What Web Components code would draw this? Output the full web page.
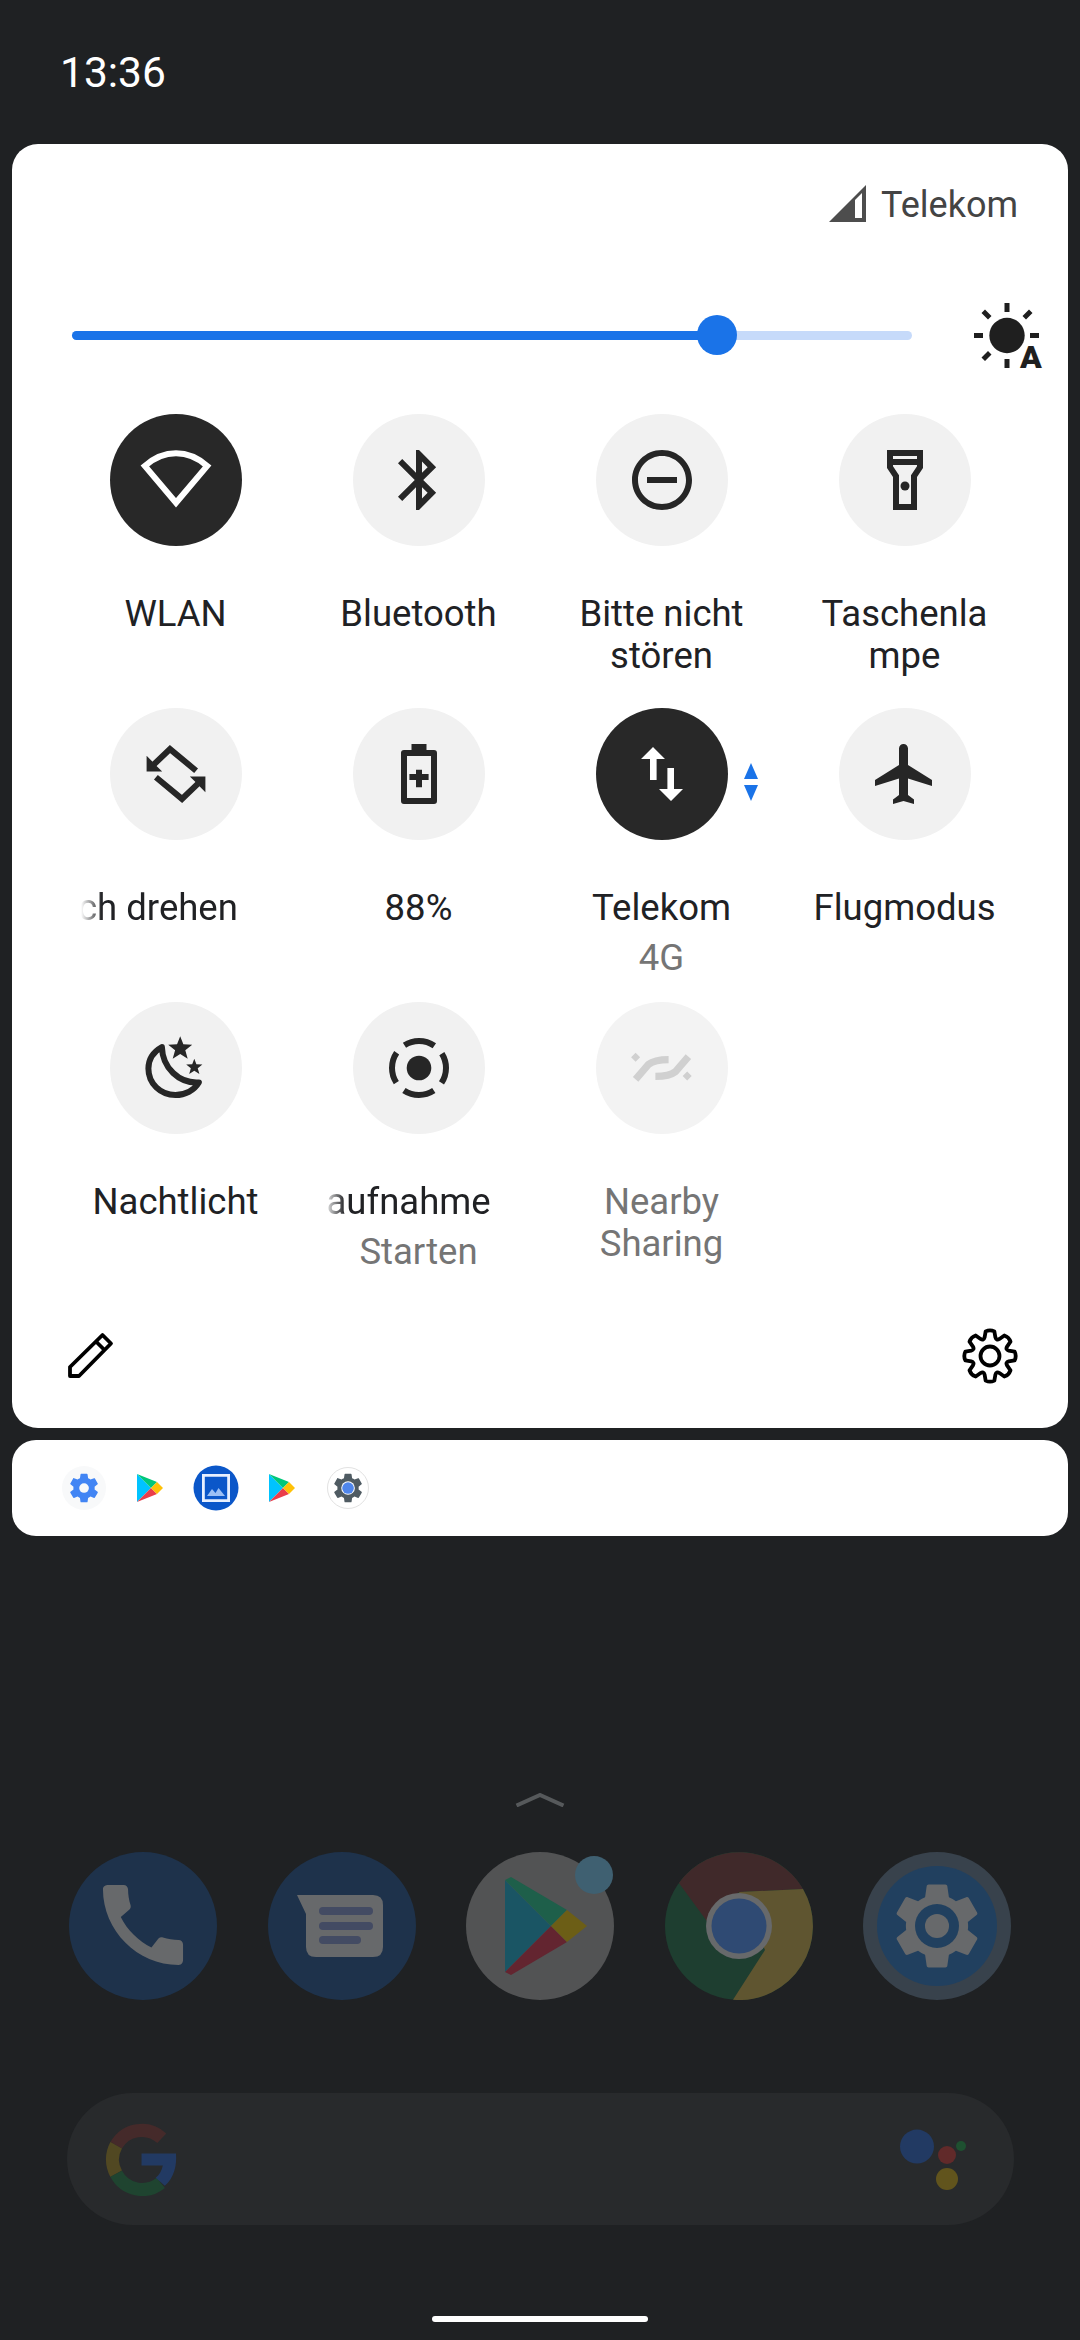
<!doctype html>
<html lang="de">
<head>
<meta charset="utf-8">
<title>Schnelleinstellungen</title>
<style>
  html, body { margin: 0; padding: 0; }
  body { width: 1080px; height: 2340px; background: #1f2123; font-family: Roboto, "Liberation Sans", sans-serif; overflow: hidden; }
  .qs-icon { width: 72px; height: 72px; display: block; }
</style>
</head>
<body>

<phone-screen>
  <status-bar time="13:36"></status-bar>

  <qs-panel>
    <carrier-row slot="carrier" name="Telekom"></carrier-row>
    <brightness-row slot="brightness" value="0.768"></brightness-row>

    <qs-tile label="WLAN" active>
      <svg class="qs-icon" viewBox="0 0 24 24"><path d="M12 19.6 1.6 7.3C4.6 4.7 8.1 3.1 12 3.1s7.4 1.6 10.4 4.2z" fill="none" stroke="#fff" stroke-width="2"/></svg>
    </qs-tile>
    <qs-tile label="Bluetooth">
      <svg class="qs-icon" viewBox="0 0 24 24"><path fill="#262626" d="M17.71 7.71L12 2h-1v7.59L6.41 5 5 6.41 10.59 12 5 17.59 6.41 19 11 14.41V22h1l5.71-5.71-4.3-4.29 4.3-4.29zM13 5.83l1.88 1.88L13 9.59V5.83zm1.88 10.46L13 18.17v-3.76l1.88 1.88z"/></svg>
    </qs-tile>
    <qs-tile label="Bitte nicht stören">
      <svg class="qs-icon" viewBox="0 0 24 24"><path fill="#262626" d="M7 11v2h10v-2H7zm5-9C6.48 2 2 6.48 2 12s4.48 10 10 10 10-4.48 10-10S17.52 2 12 2zm0 18c-4.41 0-8-3.59-8-8s3.59-8 8-8 8 3.59 8 8-3.59 8-8 8z"/></svg>
    </qs-tile>
    <qs-tile label="Taschenla mpe">
      <svg class="qs-icon" viewBox="0 0 24 24"><path fill="#262626" d="M18 2H6v6l2 3v11h8V11l2-3V2zm-2 2v1H8V4h8zm-2 6.4V20h-4v-9.6l-2-3V7h8v.4l-2 3z"/><circle cx="12" cy="14" r="1.5" fill="#262626"/></svg>
    </qs-tile>

    <qs-tile label="ch drehen" fade style="--shift: 2.5px">
      <svg class="qs-icon" viewBox="0 0 24 24"><path d="M18.7 10.9 10 3.7 3.8 9.6M5.3 13.1 14 20.3 20.2 14.4" fill="none" stroke="#262626" stroke-width="2"/><path fill="#262626" d="M2.2 5.9v5.3h5.2l-1.9-1.9L4.1 7.8zM21.8 18.1v-5.3h-5.2l1.9 1.9 1.4 1.5z"/></svg>
    </qs-tile>
    <qs-tile label="88%">
      <svg class="qs-icon" viewBox="0 0 24 24"><path fill="#262626" fill-rule="evenodd" d="M9.5 2h5v2H17a1 1 0 0 1 1 1v16a1 1 0 0 1-1 1H7a1 1 0 0 1-1-1V5a1 1 0 0 1 1-1h2.5zM8 6v14h8V6zM11 10.6h2V12h2.2v2H13v2.4h-2V14H8.8v-2H11z"/></svg>
    </qs-tile>
    <qs-tile label="Telekom" sub="4G" active>
      <svg class="qs-icon" viewBox="0 0 24 24"><path fill="#fff" d="M9 3l4 4h-2.8v7H8V7H5zM15 21l-4-4h2.8v-7H16v7h3z"/></svg>
      <data-arrows slot="extra"></data-arrows>
    </qs-tile>
    <qs-tile label="Flugmodus">
      <svg class="qs-icon" viewBox="0 0 24 24"><path fill="#262626" d="M21 16v-2l-8-5V3.5c0-.83-.67-1.5-1.5-1.5S10 2.67 10 3.5V9l-8 5v2l8-2.5V19l-2 1.5V22l3.5-1 3.5 1v-1.5L13 19v-5.5l8 2.5z"/></svg>
    </qs-tile>

    <qs-tile label="Nachtlicht">
      <svg class="qs-icon" viewBox="0 0 24 24"><path d="M7.3 5C4.5 6.6 2.8 9.2 2.8 12.2 2.8 17.2 6.8 21 11.8 21c3.2 0 6.2-1.5 7.8-4.2C13 17.2 7.500 12 7.300 5z" fill="none" stroke="#262626" stroke-width="2" stroke-linejoin="round"/><path fill="#262626" d="M13.4 1.4l1.05 2.7 2.95.15-2.3 1.85.8 2.85-2.5-1.6-2.5 1.6.8-2.85-2.3-1.85 2.95-.15zM18.1 8.9l.7 1.85 2 .1-1.55 1.25.55 1.9-1.7-1.1-1.7 1.1.55-1.9-1.55-1.25 2-.1z"/></svg>
    </qs-tile>
    <qs-tile label="aufnahme" sub="Starten" fade style="--shift: 8px">
      <svg class="qs-icon" viewBox="0 0 24 24"><circle cx="12" cy="12" r="4.1" fill="#262626"/><circle cx="12" cy="12" r="9" fill="none" stroke="#262626" stroke-width="2" stroke-dasharray="10.5 3.637" stroke-dashoffset="5.25"/></svg>
    </qs-tile>
    <qs-tile label="Nearby Sharing" disabled>
      <svg class="qs-icon" viewBox="0 0 24 24"><path d="M3.2 15.8 7.5 10.8C9 9.600 11 9.200 14.200 9.200M20.800 8.200 16.500 13.200C15 14.400 13 14.800 9.800 14.800" fill="none" stroke="#d0d0d0" stroke-width="2.400"/><path fill="#d0d0d0" d="M3.2 6.900 4.700 8.400 3.200 9.900 1.700 8.400zM20.400 13.200 21.900 14.700 20.400 16.200 18.900 14.700z"/></svg>
    </qs-tile>

    <svg slot="edit" width="50" height="50" viewBox="0 0 50 50"><path d="M5 45V36L37.5 4 46 12.5 14 45zM31 10.5 39.5 19" fill="none" stroke="#000" stroke-width="3.8" stroke-linejoin="round"/></svg>
    <settings-gear slot="settings"></settings-gear>
  </qs-panel>

  <notif-shelf>
    <notif-icon kind="gear-blue"></notif-icon>
    <notif-icon kind="play"></notif-icon>
    <notif-icon kind="photo"></notif-icon>
    <notif-icon kind="play"></notif-icon>
    <notif-icon kind="gear-gray"></notif-icon>
  </notif-shelf>

  <home-dim></home-dim>
</phone-screen>

<script>
customElements.define('phone-screen', class extends HTMLElement {
  constructor() {
    super();
    this.attachShadow({ mode: 'open' }).innerHTML = `
      <style>
        :host { display: flex; flex-direction: column; width: 1080px; height: 2340px; box-sizing: border-box; padding: 0 12px; }
      </style>
      <slot></slot>`;
  }
});

customElements.define('status-bar', class extends HTMLElement {
  connectedCallback() {
    this.attachShadow({ mode: 'open' }).innerHTML = `
      <style>
        :host { display: flex; align-items: center; height: 144px; flex: none; box-sizing: border-box; padding: 0 0 0 48px; color: #fff; font-size: 42.5px; }
      </style>
      <span>${this.getAttribute('time')}</span>`;
  }
});

customElements.define('qs-panel', class extends HTMLElement {
  constructor() {
    super();
    this.attachShadow({ mode: 'open' }).innerHTML = `
      <style>
        :host { display: block; height: 1284px; flex: none; box-sizing: border-box; background: #fff; border-radius: 26px; }
        .grid { display: grid; grid-template-columns: repeat(4, 243px); grid-auto-rows: 294px; margin: 0 0 0 42px; }
        .foot { display: flex; justify-content: space-between; align-items: center; height: 140px; padding: 0 46px 0 53px; }
        .foot ::slotted(svg) { display: block; }
      </style>
      <slot name="carrier"></slot>
      <slot name="brightness"></slot>
      <div class="grid"><slot></slot></div>
      <div class="foot"><slot name="edit"></slot><slot name="settings"></slot></div>`;
  }
});

customElements.define('carrier-row', class extends HTMLElement {
  connectedCallback() {
    this.attachShadow({ mode: 'open' }).innerHTML = `
      <style>
        :host { display: flex; justify-content: flex-end; align-items: center; gap: 15px; height: 122px; padding: 0 50px 0 0; color: #444; font-size: 36px; box-sizing: border-box; }
        svg { display: block; margin-top: -3px; }
      </style>
      <svg width="37" height="37" viewBox="0 0 37 37"><path fill="#4d4d4d" d="M37 0v37H0z"/><path fill="#fff" d="M26 15l7-7v25h-7z"/></svg>
      <span>${this.getAttribute('name')}</span>`;
  }
});

customElements.define('brightness-row', class extends HTMLElement {
  connectedCallback() {
    const v = Number(this.getAttribute('value')) * 100;
    this.attachShadow({ mode: 'open' }).innerHTML = `
      <style>
        :host { display: flex; align-items: center; height: 138px; padding: 0 0 0 60px; box-sizing: border-box; }
        .track { position: relative; width: 840px; height: 9px; border-radius: 5px; background: #c6dafa; }
        .fill { height: 100%; width: ${v}%; border-radius: 5px; background: #1a73e8; }
        .thumb { position: absolute; left: ${v}%; top: 50%; width: 40px; height: 40px; margin: -20px 0 0 -20px; border-radius: 50%; background: #1a73e8; }
        svg { display: block; margin-left: 60px; }
        text { font: 900 32px Roboto, "Liberation Sans", sans-serif; }
      </style>
      <div class="track"><div class="fill"></div><div class="thumb"></div></div>
      <svg width="76" height="84" viewBox="0 -6 76 84" fill="#1f1f1f">
        <circle cx="35" cy="36.5" r="17.7"/>
        <path d="M32.5 4h5v9h-5zM32.500 60h5v9h-5zM2 34h9v5H2zM58 34h9v5H58zM9.500 14l3.500-3.500 6.500 6.500-3.500 3.500zM57 10.500l3.500 3.500-6.500 6.500-3.500-3.500zM13 62l-3.500-3.500 6.500-6.500 3.500 3.500z"/>
        <text x="59" y="69" text-anchor="middle">A</text>
      </svg>`;
  }
});

customElements.define('qs-tile', class extends HTMLElement {
  constructor() {
    super();
    this.attachShadow({ mode: 'open' }).innerHTML = `
      <style>
        :host { display: flex; flex-direction: column; align-items: center; padding-top: 10px; box-sizing: border-box; font-size: 36.5px; line-height: 42px; color: #202124; text-align: center; min-width: 0; }
        .wrap { position: relative; width: 132px; height: 132px; }
        .circle { width: 132px; height: 132px; border-radius: 50%; background: #f1f1f1; display: flex; align-items: center; justify-content: center; }
        :host([active]) .circle { background: #282828; }
        :host([disabled]) .circle { background: #f3f3f3; }
        :host([disabled]) .label { color: #757575; }
        ::slotted([slot="extra"]) { position: absolute; left: 148px; top: 55px; }
        .label { width: 186px; margin-top: 47px; overflow-wrap: anywhere; }
        :host([fade]) .label { box-sizing: border-box; width: 200px; padding-left: var(--shift, 0); white-space: nowrap; text-align: left; -webkit-mask-image: linear-gradient(to right, transparent 5px, #000 26px); mask-image: linear-gradient(to right, transparent 5px, #000 26px); }
        .sub { color: #757575; margin-top: 8px; }
      </style>
      <div class="wrap"><div class="circle"><slot></slot></div><slot name="extra"></slot></div>
      <div class="label"></div>
      <div class="sub" hidden></div>`;
  }
  connectedCallback() {
    const S = this.shadowRoot;
    S.querySelector('.label').textContent = this.getAttribute('label');
    const sub = this.getAttribute('sub');
    if (sub) {
      S.querySelector('.sub').textContent = sub;
      S.querySelector('.sub').hidden = false;
    }
  }
});

customElements.define('data-arrows', class extends HTMLElement {
  constructor() {
    super();
    this.attachShadow({ mode: 'open' }).innerHTML = `
      <style>:host { display: block; width: 14px; height: 38px; } svg { display: block; }</style>
      <svg width="14" height="38" viewBox="0 0 14 38"><path fill="#1a73e8" d="M7 0l7 16H0zM7 38L0 22h14z"/></svg>`;
  }
});

// 齿轮轮廓: 8 个圆角齿, 一个朝上
customElements.define('settings-gear', class extends HTMLElement {
  connectedCallback() {
    const at = (r, deg) => {
      const a = deg * Math.PI / 180;
      return (32 + r * Math.cos(a)).toFixed(2) + ' ' + (32 + r * Math.sin(a)).toFixed(2);
    };
    let d = '';
    for (let i = 0; i < 8; i++) {
      const t = i * 45 - 90;
      d += (i ? 'L' : 'M') + at(19.5, t - 16) + 'L' + at(25, t - 10) + 'Q' + at(26.8, t) + ' ' + at(25, t + 10)
        + 'L' + at(19.5, t + 16) + 'Q' + at(16.5, t + 22.5) + ' ' + at(19.5, t + 29);
    }
    this.attachShadow({ mode: 'open' }).innerHTML = `
      <style>:host { display: block; width: 64px; height: 64px; } svg { display: block; }</style>
      <svg width="64" height="64" viewBox="0 0 64 64" fill="none" stroke="#000" stroke-width="3.8" stroke-linejoin="round"><path d="${d}Z"/><circle cx="32" cy="32" r="9.5"/></svg>`;
  }
});

customElements.define('notif-shelf', class extends HTMLElement {
  constructor() {
    super();
    this.attachShadow({ mode: 'open' }).innerHTML = `
      <style>
        :host { display: grid; grid-template-columns: repeat(5, 66px); align-items: center; justify-items: center; height: 96px; flex: none; margin-top: 12px; padding-left: 39px; border-radius: 24px; background: #fff; }
      </style>
      <slot></slot>`;
  }
});

const GEAR = 'M19.43 12.98c.04-.32.07-.64.07-.98s-.03-.66-.07-.98l2.11-1.65c.19-.15.24-.42.12-.64l-2-3.46c-.12-.22-.39-.3-.61-.22l-2.49 1c-.52-.4-1.08-.73-1.69-.98l-.38-2.65C14.46 2.18 14.25 2 14 2h-4c-.25 0-.46.18-.49.42l-.38 2.65c-.61.25-1.17.59-1.69.98l-2.49-1c-.23-.09-.49 0-.61.22l-2 3.46c-.13.22-.07.49.12.64l2.11 1.65c-.04.32-.07.65-.07.98s.03.66.07.98l-2.11 1.65c-.19.15-.24.42-.12.64l2 3.46c.12.22.39.3.61.22l2.49-1c.52.4 1.08.73 1.69.98l.38 2.65c.03.24.24.42.49.42h4c.25 0 .46-.18.49-.42l.38-2.65c.61-.25 1.17-.59 1.69-.98l2.49 1c.23.09.49 0 .61-.22l2-3.46c.12-.22.07-.49-.12-.64l-2.11-1.65z';

customElements.define('notif-icon', class extends HTMLElement {
  connectedCallback() {
    const kind = this.getAttribute('kind');
    const art = {
      'gear-blue': `<circle cx="24" cy="24" r="22" fill="#f8f9fa"/>
        <g transform="translate(7 7) scale(1.42)"><path fill="#4285f4" d="${GEAR}"/><circle cx="12" cy="12" r="3.4" fill="#f8f9fa"/></g>`,
      'play': `<path fill="#00c3ff" d="M11 10v28l14-14z"/><path fill="#00c77a" d="M11 10l14 14 6-6z"/><path fill="#ea3d4b" d="M11 38l14-14 6 6z"/><path fill="#ffc107" d="M31 18l-6 6 6 6 6-6z"/>`,
      'photo': `<circle cx="24" cy="24" r="22.5" fill="#0b57c9"/>
        <path fill="none" stroke="#e8f0fe" stroke-width="2.8" d="M11.4 11.4h25.2v25.2H11.4z"/>
        <path fill="#9cc0f5" d="M15 32l5-7 3.5 4 3-5 6.5 8z"/>`,
      'gear-gray': `<circle cx="24" cy="24" r="20.5" fill="#fff" stroke="#e2e2e2"/>
        <g transform="translate(7 7) scale(1.42)"><path fill="#4f5b62" d="${GEAR}"/><circle cx="12" cy="12" r="4.8" fill="#fff"/><circle cx="12" cy="12" r="4.1" fill="#4f86ec"/></g>`
    }[kind];
    this.attachShadow({ mode: 'open' }).innerHTML = `
      <style>:host { display: block; width: 48px; height: 48px; } svg { display: block; }</style>
      <svg width="48" height="48" viewBox="0 0 48 48">${art}</svg>`;
  }
});

customElements.define('home-dim', class extends HTMLElement {
  connectedCallback() {
    this.attachShadow({ mode: 'open' }).innerHTML = `
      <style>
        :host { display: flex; flex-direction: column; align-items: center; flex: 1; margin: 0 -12px; }
        .chev { display: block; margin-top: 257px; }
        .dock { display: grid; grid-template-columns: repeat(5, 148px); gap: 50.5px; margin-top: 45px; }
        .dock svg { display: block; }
        .search { display: flex; justify-content: space-between; align-items: center; width: 947px; height: 132px; margin-top: 93px; border-radius: 66px; background: #282a2c; box-sizing: border-box; padding: 0 45px 0 37px; }
        .search svg { display: block; }
        .pill { width: 216px; height: 6px; border-radius: 3px; background: #fff; margin-top: 91px; }
      </style>
      <svg class="chev" width="50" height="14" viewBox="0 0 50 14"><path d="M1.5 12.5 25 2l23.5 10.5" fill="none" stroke="#56595b" stroke-width="4"/></svg>
      <div class="dock">
        <svg viewBox="0 0 148 148"><circle cx="74" cy="74" r="74" fill="#1e324b"/><path transform="translate(20.6 19.6) scale(4.45)" fill="#67696b" d="M20.01 15.38c-1.23 0-2.42-.2-3.53-.56-.35-.12-.74-.03-1.01.24l-1.57 1.97c-2.83-1.35-5.48-3.9-6.89-6.83l1.95-1.66c.27-.28.35-.67.24-1.02-.37-1.11-.56-2.3-.56-3.53 0-.54-.45-.99-.99-.99H4.19C3.65 3 3 3.24 3 3.99 3 13.28 10.73 21 20.01 21c.71 0 .99-.63.99-1.18v-3.45c0-.54-.45-.99-.99-.99z"/></svg>
        <svg viewBox="0 0 148 148"><circle cx="74" cy="74" r="74" fill="#1e324b"/><path fill="#67696b" d="M29 43h76q10 0 10 10v42q0 10-10 10H48q-10 0-10-10V62z"/><rect x="51" y="55" width="54" height="8" rx="4" fill="#434b63"/><rect x="51" y="70" width="54" height="8" rx="4" fill="#434b63"/><rect x="51" y="84" width="42" height="8" rx="4" fill="#434b63"/></svg>
        <svg viewBox="0 0 148 148"><circle cx="74" cy="74" r="74" fill="#525354"/><g transform="translate(0 -8)"><path fill="#1a5564" d="M39 36v92l46-46z"/><path fill="#1e5f4a" d="M39 36l46 46 16-16-56-33z"/><path fill="#632530" d="M39 128l46-46 16 16-56 33z"/><path fill="#6c5e16" d="M101 66 85 82l16 16 20-16z"/></g><circle cx="128" cy="23" r="19" fill="#3f6071"/></svg>
        <svg viewBox="0 0 148 148"><circle cx="74" cy="74" r="74" fill="#1e3e30"/><path fill="#40292a" d="M13.9 31A74 74 0 0 1 138 37L74 40 44 72z"/><path fill="#5f5530" d="M138 37A74 74 0 0 1 68 147.8L100 98 74 40z"/><circle cx="74" cy="74" r="33" fill="#67696b"/><circle cx="74" cy="74" r="27.5" fill="#2f4a73"/></svg>
        <svg viewBox="0 0 148 148"><circle cx="74" cy="74" r="74" fill="#38424c"/><circle cx="74" cy="74" r="60" fill="#21405f"/><g transform="translate(24.2 24.2) scale(4.15)"><path fill="#67696b" d="${GEAR}"/><circle cx="12" cy="12" r="5.3" fill="#21405f"/><circle cx="12" cy="12" r="2.9" fill="#67696b"/></g></svg>
      </div>
      <div class="search">
        <svg width="73" height="73" viewBox="0 0 72 72"><path fill="none" stroke="#452a2a" stroke-width="13" d="M57 15A29 29 0 0 0 12 22"/><path fill="none" stroke="#514822" stroke-width="13" d="M12 22a29 29 0 0 0 0 28"/><path fill="none" stroke="#1f4430" stroke-width="13" d="M12 50a29 29 0 0 0 44 9"/><path fill="#223a63" d="M37 30h34c1 12-2 24-11 32l-9-8c4-3 6-7 7-12H37z"/></svg>
        <svg width="70" height="70" viewBox="0 0 70 70"><circle cx="18" cy="22.6" r="17" fill="#223a63"/><circle cx="48" cy="31" r="9" fill="#612a2a"/><circle cx="48" cy="55" r="11" fill="#61541d"/><circle cx="62" cy="22" r="5" fill="#1e5030"/></svg>
      </div>
      <div class="pill"></div>`;
  }
});
</script>
</body>
</html>
